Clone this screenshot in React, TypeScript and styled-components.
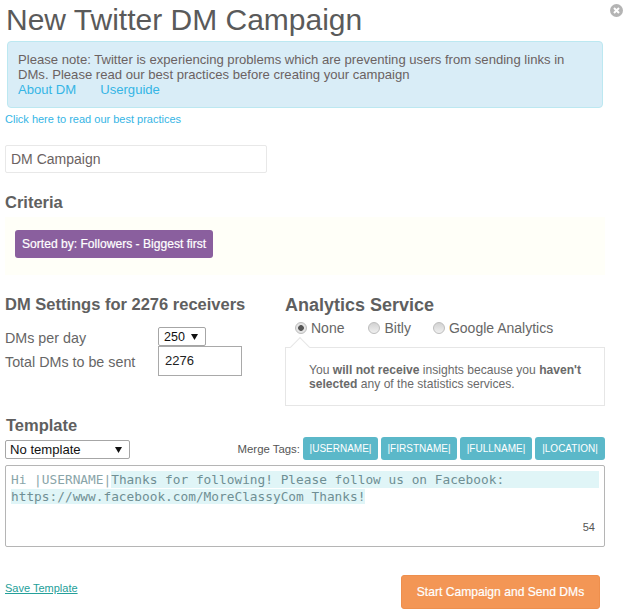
import styled, { createGlobalStyle } from "styled-components";

const GlobalStyle = createGlobalStyle`
  html, body {
    margin: 0;
    padding: 0;
    background: #fff;
    font-family: "Liberation Sans", Arial, sans-serif;
    color: #666;
  }
  * { box-sizing: border-box; }
`;

const Modal = styled.div`
  position: relative;
  width: 627px;
  height: 616px;
  padding: 2px 22px 0 5px;
  overflow: hidden;
`;

const CloseIcon = styled.svg`
  position: absolute;
  top: 4px;
  right: 4px;
`;

const Title = styled.h1`
  margin: 0 0 3px 1px;
  font-size: 30px;
  line-height: 36px;
  font-weight: 400;
  color: #5a5a5a;
`;

const Notice = styled.div`
  margin: 0 2px;
  height: 67px;
  padding: 10px;
  background: #d9edf7;
  border: 1px solid #bce8f1;
  border-radius: 4px;
  font-size: 13.1px;
  line-height: 15px;
  color: #6b6262;
`;

const NoticeLinks = styled.div`
  display: flex;
  gap: 24px;
`;

const Link = styled.a`
  color: #35b5e5;
`;

const BestPractices = styled.a`
  display: block;
  margin-top: 5px;
  font-size: 11px;
  line-height: 13px;
  color: #35b5e5;
`;

const NameInput = styled.div`
  width: 262px;
  height: 28px;
  margin-top: 19px;
  padding: 0 5px;
  border: 1px solid #e8e8e8;
  border-radius: 2px;
  font-size: 14px;
  line-height: 27px;
  color: #6b6262;
`;

const SectionTitle = styled.h3`
  margin: 21px 0 0;
  font-size: 16.5px;
  line-height: 16px;
  font-weight: 700;
  color: #606060;
`;

const CriteriaBox = styled.div`
  width: 600px;
  height: 58px;
  margin-top: 7px;
  padding: 13px 10px;
  background: #fffff8;
`;

const Chip = styled.span`
  display: inline-block;
  width: 198px;
  height: 28px;
  padding-left: 7px;
  background: #8a5f9e;
  border-radius: 3px;
  color: #fff;
  font-size: 12.1px;
  line-height: 28px;
  -webkit-text-stroke: 0.2px #fff;
`;

const Columns = styled.div`
  display: flex;
  width: 600px;
  margin-top: 21px;
`;

const SettingsColumn = styled.div`
  width: 280px;
`;

const SettingsTitle = styled(SectionTitle)`
  margin-top: 0;
`;

const SettingsRows = styled.div`
  margin-top: 15px;
`;

const SettingRow = styled.div<{ $height: number }>`
  display: flex;
  height: ${({ $height }) => $height}px;
  font-size: 14.3px;
  color: #666;
`;

const SettingLabel = styled.span<{ $lh: number }>`
  width: 153px;
  line-height: ${({ $lh }) => $lh}px;
`;

const SmallSelect = styled.div`
  display: flex;
  align-items: center;
  justify-content: space-between;
  width: 48px;
  height: 19px;
  padding: 0 7px 0 5px;
  border: 1px solid #a6a6a6;
  border-radius: 2px;
  font-size: 12.5px;
  color: #111;
`;

const SmallInput = styled.div`
  width: 84px;
  height: 30px;
  padding: 0 6px;
  border: 1px solid #a9a9a9;
  font-size: 13px;
  line-height: 27px;
  color: #222;
`;

const AnalyticsColumn = styled.div`
  width: 320px;
  margin-top: -1px;
`;

const AnalyticsTitle = styled.h3`
  margin: 0;
  font-size: 18px;
  line-height: 20px;
  font-weight: 700;
  color: #5f5f5f;
`;

const RadioRow = styled.div`
  display: flex;
  align-items: center;
  height: 31px;
  margin-top: 1px;
  padding: 0 0 7px 10px;
  font-size: 14px;
`;

const RadioItem = styled.label<{ $gap: number }>`
  display: flex;
  align-items: center;
  gap: 4px;
  margin-right: ${({ $gap }) => $gap}px;
  color: #666;
`;

const RadioDot = styled.span<{ $checked?: boolean }>`
  display: block;
  width: 12px;
  height: 12px;
  border-radius: 50%;
  border: 1px solid #bdbdbd;
  background: ${({ $checked }) =>
    $checked
      ? "radial-gradient(circle, #555 0 2.5px, #e4e4e4 3.2px)"
      : "linear-gradient(#d2d2d2, #f0f0f0)"};
`;

const InsightBox = styled.div`
  position: relative;
  width: 320px;
  height: 59px;
  padding: 15px 18px 15px 23px;
  border: 1px solid #e6e6e6;
  font-size: 12.1px;
  line-height: 14px;
  color: #6a6a6a;
`;

const Notch = styled.span`
  position: absolute;
  top: -8px;
  left: 7px;
  width: 14px;
  height: 14px;
  background: #fff;
  border-top: 1px solid #e6e6e6;
  border-left: 1px solid #e6e6e6;
  transform: rotate(45deg);
`;

const TemplateTitle = styled.h3`
  margin: 10px 0 0 1px;
  font-size: 16.5px;
  line-height: 18px;
  font-weight: 700;
  color: #5f5f5f;
`;

const TemplateBar = styled.div`
  display: flex;
  align-items: flex-start;
  justify-content: space-between;
  width: 600px;
  margin-top: 3px;
`;

const TemplateSelect = styled(SmallSelect)`
  width: 125px;
  margin-top: 3px;
  padding: 0 7px 0 4px;
  font-size: 13.1px;
`;

const MergeTags = styled.div`
  display: flex;
  align-items: center;
  gap: 3px;
`;

const MergeLabel = styled.span`
  font-size: 11.4px;
  color: #555;
`;

const MergeTag = styled.span<{ $width: number }>`
  width: ${({ $width }) => $width}px;
  height: 23px;
  background: #5bb8c9;
  border-radius: 3px;
  color: #fff;
  font-size: 10px;
  line-height: 23px;
  text-align: center;
`;

const MessageBox = styled.div`
  position: relative;
  width: 600px;
  height: 82px;
  margin-top: 5px;
  padding: 5px;
  border: 1px solid #b5b5b5;
  border-radius: 2px;
  font-family: "DejaVu Sans Mono", monospace;
  font-size: 12.8px;
  line-height: 17px;
  color: #8aa5a9;
`;

const MessageLine = styled.div`
  display: flex;
`;

const Highlight = styled.span<{ $grow?: boolean }>`
  flex: ${({ $grow }) => ($grow ? 1 : "none")};
  background: #e0f5f7;
  color: #6f8f94;
`;

const Counter = styled.span`
  position: absolute;
  right: 9px;
  bottom: 12px;
  font-family: "Liberation Sans", Arial, sans-serif;
  font-size: 11px;
  line-height: 13px;
  color: #555;
`;

const Footer = styled.div`
  display: flex;
  align-items: flex-start;
  justify-content: space-between;
  width: 595px;
  margin-top: 28px;
`;

const SaveLink = styled.a`
  margin-top: 7px;
  font-size: 11px;
  line-height: 13px;
  color: #24a09a;
  text-decoration: underline;
`;

const StartButton = styled.button`
  width: 199px;
  height: 34px;
  padding: 0;
  background: #f39655;
  border: 1px solid #ee8f4d;
  border-radius: 3px;
  color: #fff;
  font-family: inherit;
  font-size: 12.1px;
  -webkit-text-stroke: 0.2px #fff;
`;

const Arrow = () => (
  <svg width="7" height="6" viewBox="0 0 7 6">
    <path d="M0 0h7L3.5 6z" fill="#111" />
  </svg>
);

export default function App() {
  return (
    <>
      <GlobalStyle />
      <Modal>
        <CloseIcon width="13" height="13" viewBox="0 0 13 13">
          <circle cx="6.5" cy="6.5" r="6.5" fill="#b4b4b4" />
          <path d="M4 4l5 5M9 4l-5 5" stroke="#fff" strokeWidth="2" />
        </CloseIcon>
        <Title>New Twitter DM Campaign</Title>
        <Notice>
          Please note: Twitter is experiencing problems which are preventing users from sending links in DMs. Please read our best practices before creating your campaign
          <NoticeLinks>
            <Link>About DM</Link>
            <Link>Userguide</Link>
          </NoticeLinks>
        </Notice>
        <BestPractices>Click here to read our best practices</BestPractices>
        <NameInput>DM Campaign</NameInput>
        <SectionTitle>Criteria</SectionTitle>
        <CriteriaBox>
          <Chip>Sorted by: Followers - Biggest first</Chip>
        </CriteriaBox>
        <Columns>
          <SettingsColumn>
            <SettingsTitle>DM Settings for 2276 receivers</SettingsTitle>
            <SettingsRows>
              <SettingRow $height={19}>
                <SettingLabel $lh={22}>DMs per day</SettingLabel>
                <SmallSelect>
                  250 <Arrow />
                </SmallSelect>
              </SettingRow>
              <SettingRow $height={30}>
                <SettingLabel $lh={33}>Total DMs to be sent</SettingLabel>
                <SmallInput>2276</SmallInput>
              </SettingRow>
            </SettingsRows>
          </SettingsColumn>
          <AnalyticsColumn>
            <AnalyticsTitle>Analytics Service</AnalyticsTitle>
            <RadioRow>
              <RadioItem $gap={24}>
                <RadioDot $checked />
                None
              </RadioItem>
              <RadioItem $gap={22}>
                <RadioDot />
                Bitly
              </RadioItem>
              <RadioItem $gap={0}>
                <RadioDot />
                Google Analytics
              </RadioItem>
            </RadioRow>
            <InsightBox>
              <Notch />
              You <b>will not receive</b> insights because you <b>haven't selected</b> any of the statistics services.
            </InsightBox>
          </AnalyticsColumn>
        </Columns>
        <TemplateTitle>Template</TemplateTitle>
        <TemplateBar>
          <TemplateSelect>
            No template <Arrow />
          </TemplateSelect>
          <MergeTags>
            <MergeLabel>Merge Tags:</MergeLabel>
            <MergeTag $width={75}>|USERNAME|</MergeTag>
            <MergeTag $width={76}>|FIRSTNAME|</MergeTag>
            <MergeTag $width={72}>|FULLNAME|</MergeTag>
            <MergeTag $width={70}>|LOCATION|</MergeTag>
          </MergeTags>
        </TemplateBar>
        <MessageBox>
          <MessageLine>
            Hi |USERNAME|
            <Highlight $grow>Thanks for following! Please follow us on Facebook:</Highlight>
          </MessageLine>
          <Highlight>https://www.facebook.com/MoreClassyCom Thanks!</Highlight>
          <Counter>54</Counter>
        </MessageBox>
        <Footer>
          <SaveLink>Save Template</SaveLink>
          <StartButton>Start Campaign and Send DMs</StartButton>
        </Footer>
      </Modal>
    </>
  );
}
